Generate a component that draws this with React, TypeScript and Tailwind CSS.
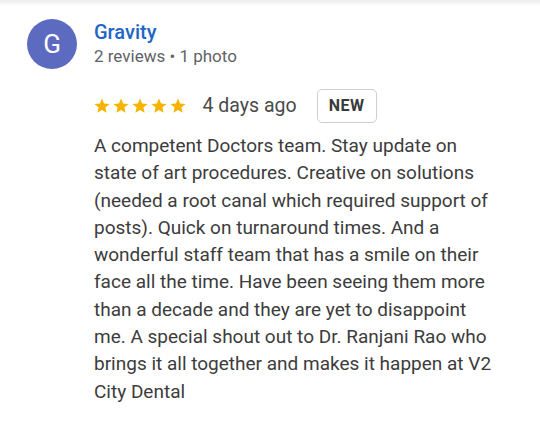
import { Fragment } from 'react'

const lines = [
  'A competent Doctors team. Stay update on',
  'state of art procedures. Creative on solutions',
  '(needed a root canal which required support of',
  'posts). Quick on turnaround times. And a',
  'wonderful staff team that has a smile on their',
  'face all the time. Have been seeing them more',
  'than a decade and they are yet to disappoint',
  'me. A special shout out to Dr. Ranjani Rao who',
  'brings it all together and makes it happen at V2',
  'City Dental',
]

function Star() {
  return (
    <svg viewBox="0 0 24 24" className="w-[18px] h-[18px] fill-[#f6b400]">
      <path d="M12 17.27L18.18 21l-1.64-7.03L22 9.24l-7.19-.61L12 2 9.19 8.63 2 9.24l5.46 4.73L5.82 21z" />
    </svg>
  )
}

export default function App() {
  return (
    <div className="relative w-[540px] h-[424px] bg-white overflow-hidden font-['Roboto',sans-serif]">
      {/* top shade */}
      <div className="absolute top-0 left-0 right-0 h-[6px] bg-gradient-to-b from-[#ececec] to-white" />

      <div className="flex pl-[27px] pt-[19px] gap-[17px]">
        <div className="w-[50px] h-[50px] rounded-full bg-[#5c6bc0] flex items-center justify-center text-white text-[26px] shrink-0">
          G
        </div>
        <div className="flex flex-col">
          <div className="text-[20px] leading-[26px] font-medium text-[#1f65c8]">Gravity</div>
          <div className="text-[17px] leading-[22px] text-[#5f6368]">2 reviews • 1 photo</div>
        </div>
      </div>

      <div className="pl-[94px]">
        <div className="flex items-center h-[34px] mt-[20px]">
          <div className="flex gap-[1px] -ml-[1.5px]">
            {[0, 1, 2, 3, 4].map((i) => (
              <Fragment key={i}>
                <Star />
              </Fragment>
            ))}
          </div>
          <span className="ml-[16px] text-[19.5px] leading-[24px] text-[#4a4a4a]">4 days ago</span>
          <span className="ml-[20px] h-[34px] w-[60px] flex items-center justify-center border border-[#cfcfcf] rounded-[5px] text-[16px] font-bold tracking-[0.5px] text-[#3a3a3a]">
            NEW
          </span>
        </div>
        <p className="mt-[9px] text-[19px] leading-[27.3px] text-[#3c3c3c] whitespace-nowrap">
          {lines.map((l) => (
            <span key={l} className="block">
              {l}
            </span>
          ))}
        </p>
      </div>
    </div>
  )
}
